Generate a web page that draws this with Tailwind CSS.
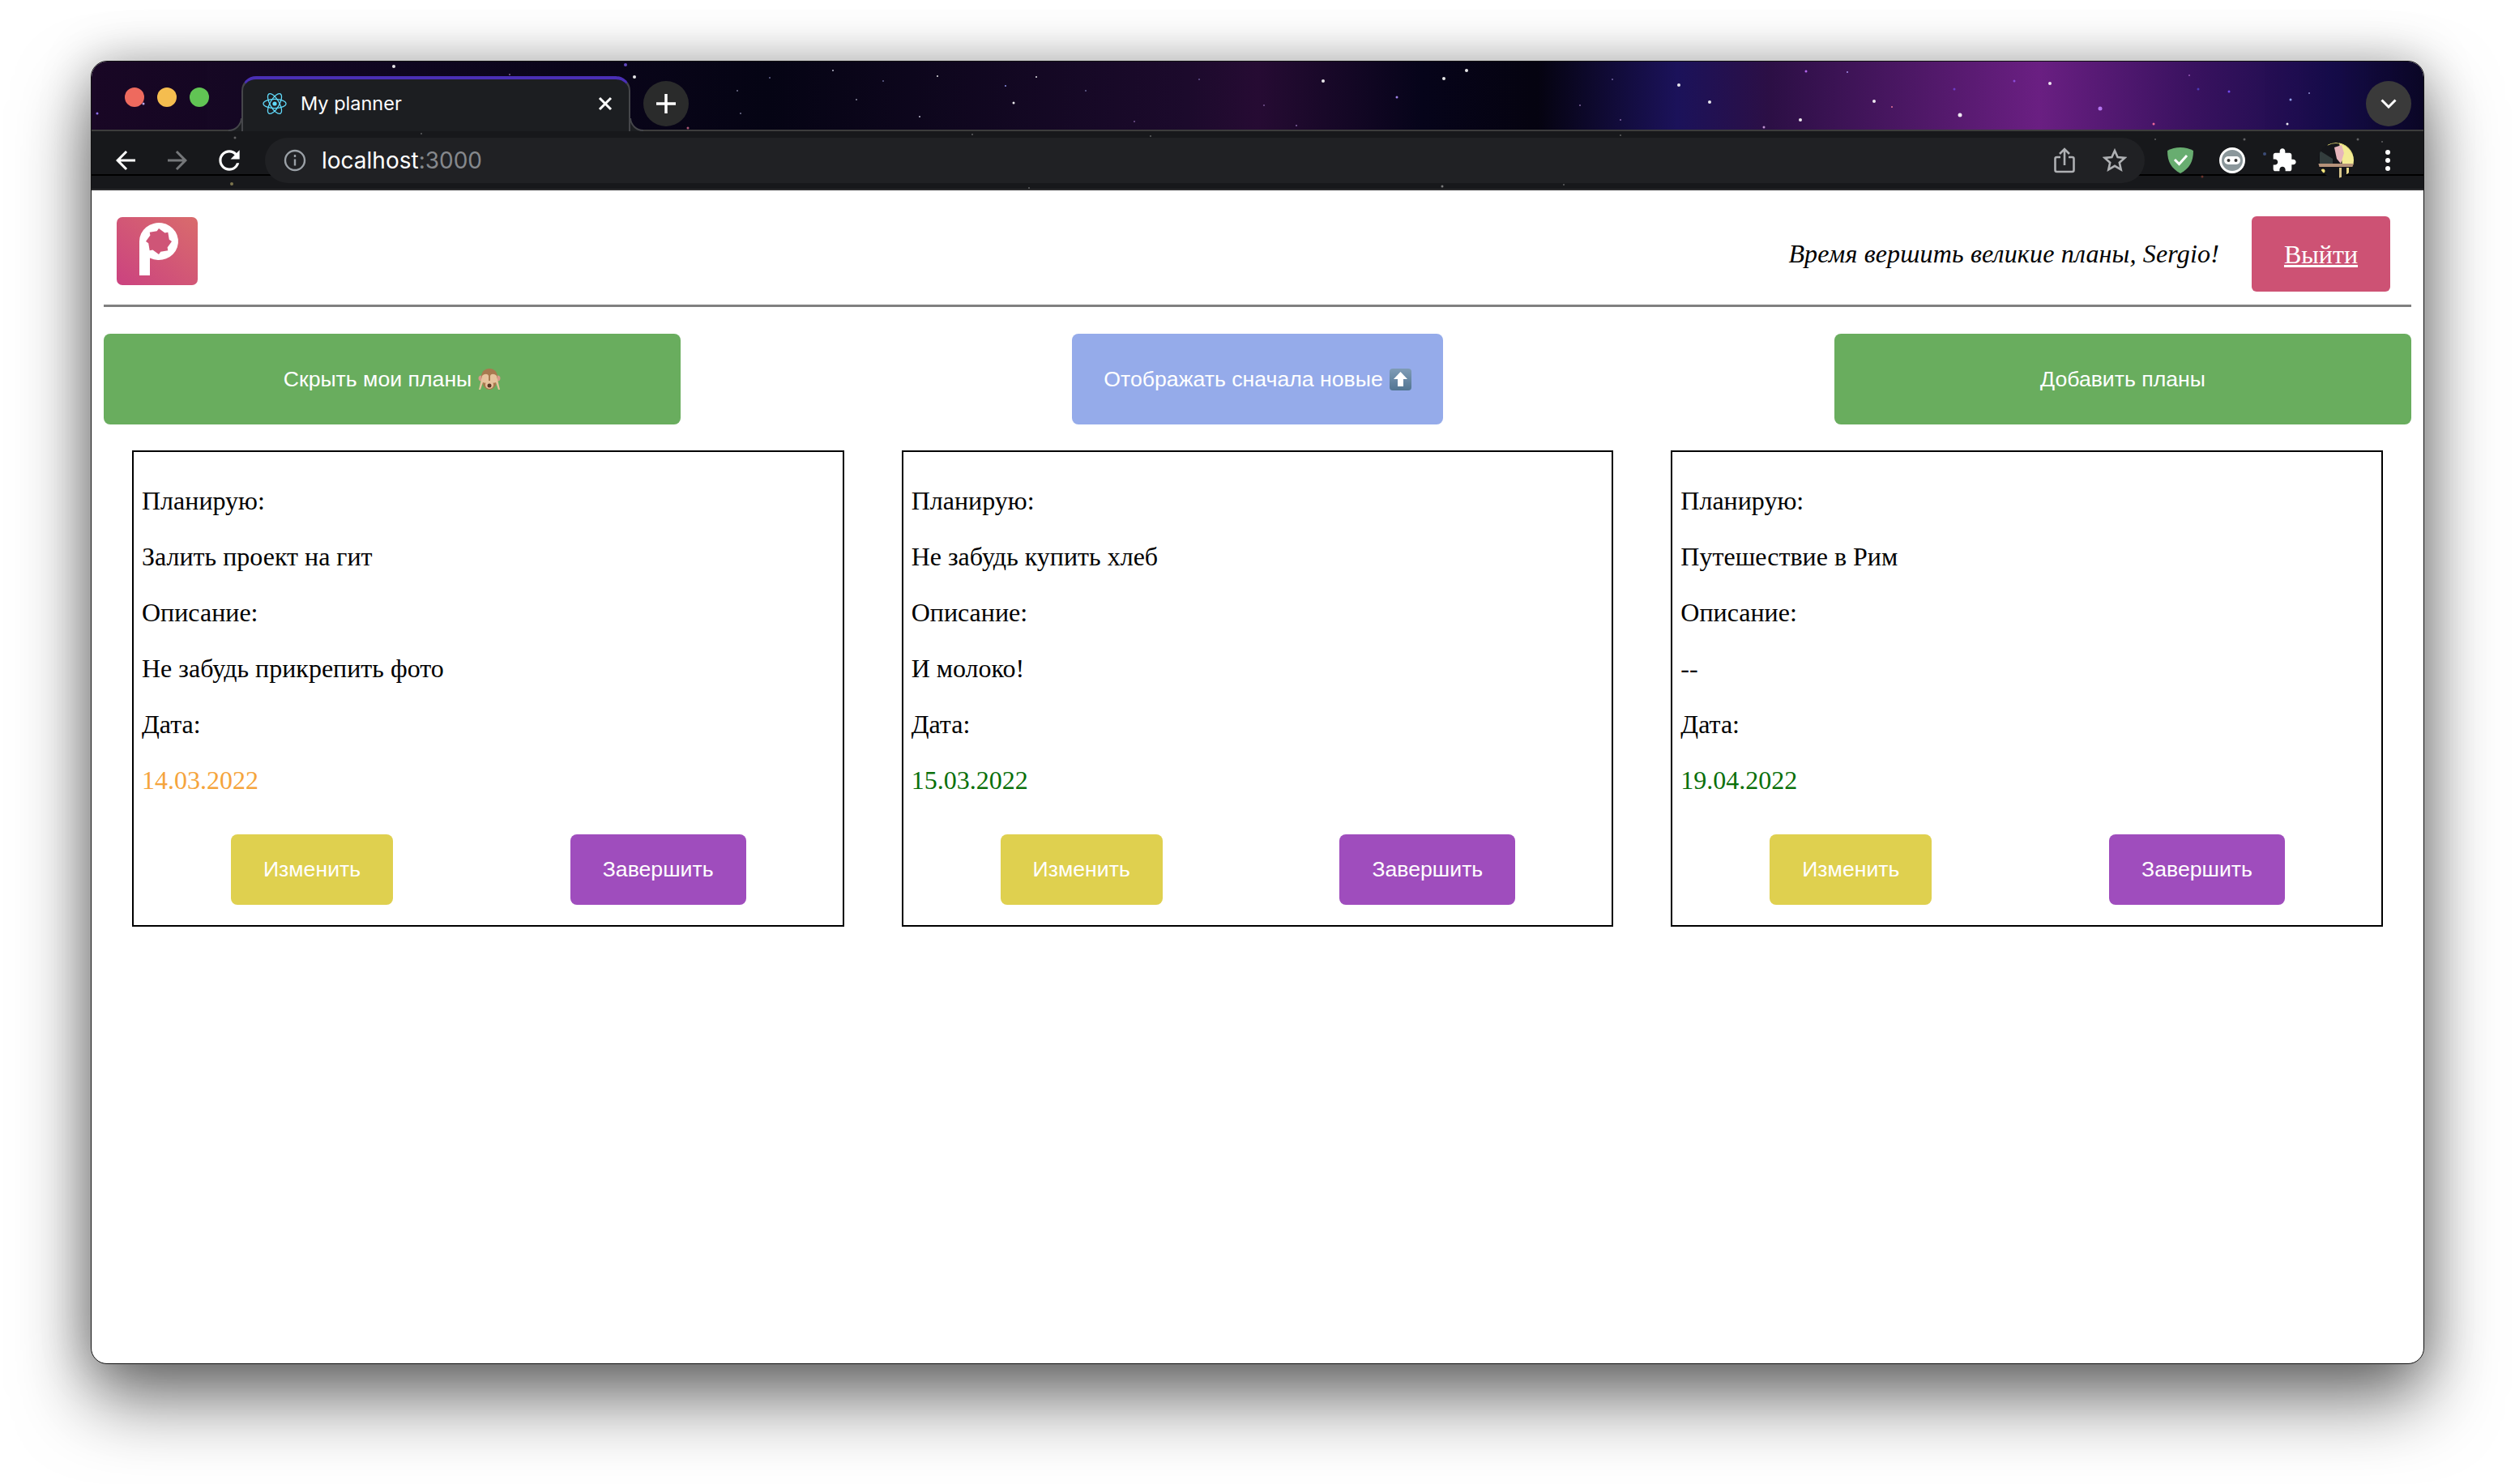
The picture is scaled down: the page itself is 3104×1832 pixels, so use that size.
<!DOCTYPE html>
<html lang="en">
  <head>
    <meta charset="UTF-8" />
    <title>My planner</title>
    <script src="https://cdn.jsdelivr.net/npm/@tailwindcss/browser@4"></script>
  </head>

  <body class="bg-white w-[3104px] h-[1832px] overflow-hidden">
    <div class="mt-[75px] ml-[112px] w-[2880px] h-[1609px] rounded-[20px] border border-[#111] bg-white overflow-hidden shadow-[0_44px_90px_rgba(0,0,0,0.55),0_0_60px_rgba(0,0,0,0.25)]">
      <!-- browser chrome -->
      <div class="relative h-[84px] flex items-start bg-[linear-gradient(90deg,#1a0826_0%,#0f0620_13%,#050414_29%,#1c0a2c_47%,#260b33_50%,#06041a_57%,#050310_62%,#1b125a_68%,#2c0f45_72%,#6a1f82_83.5%,#3a1260_90%,#160c4a_96%,#0a0625_100%)]">
        <svg class="absolute left-[-1px] top-[-1px] w-[2880px] h-[85px] opacity-90" viewBox="112 75 2880 85" fill="#fff">
          <g>
            <circle cx="486" cy="82" r="2" /><circle cx="783" cy="95" r="2" /><circle cx="177" cy="128" r="1.5" fill="#c9b6ff" />
            <circle cx="120" cy="140" r="1.5" fill="#9a7bff" /><circle cx="772" cy="80" r="2" fill="#6a50d0" /><circle cx="629" cy="92" r="1" fill="#8a6a9a" />
            <circle cx="1028" cy="87" r="1" fill="#cfcfe0" /><circle cx="1157" cy="94" r="1" /><circle cx="1279" cy="95" r="1" />
            <circle cx="1241" cy="106" r="1" fill="#9aa0ff" /><circle cx="1251" cy="127" r="1.5" /><circle cx="1135" cy="144" r="1" fill="#d0d0e0" />
            <circle cx="1057" cy="123" r="1" fill="#9a9ab0" /><circle cx="910" cy="112" r="1" fill="#8080a0" /><circle cx="914" cy="140" r="1" fill="#8080a0" />
            <circle cx="849" cy="158" r="1.5" fill="#c06080" /><circle cx="1810" cy="87" r="2" /><circle cx="1633" cy="100" r="2" />
            <circle cx="1782" cy="97" r="2" /><circle cx="1724" cy="120" r="1.5" fill="#b090ff" /><circle cx="2072" cy="105" r="2" />
            <circle cx="2110" cy="126" r="2" /><circle cx="2222" cy="148" r="2" /><circle cx="2313" cy="125" r="2" />
            <circle cx="2419" cy="142" r="2.5" /><circle cx="2229" cy="88" r="1.5" fill="#c070ff" /><circle cx="2280" cy="89" r="1" fill="#b0a0ff" />
            <circle cx="2335" cy="132" r="1" fill="#ff80a0" /><circle cx="2177" cy="157" r="1.5" fill="#d0a0e0" /><circle cx="2530" cy="103" r="2" />
            <circle cx="2592" cy="134" r="2.5" fill="#c080ff" /><circle cx="2827" cy="123" r="1.5" fill="#9db0ff" /><circle cx="2823" cy="153" r="1.5" />
            <circle cx="2702" cy="93" r="1" fill="#a060c0" /><circle cx="2751" cy="113" r="1.5" fill="#7a50ff" /><circle cx="2713" cy="110" r="1.5" fill="#5040c0" />
            <circle cx="2486" cy="100" r="1.5" fill="#9050e0" /><circle cx="2658" cy="153" r="1.5" fill="#ff70a0" /><circle cx="2960" cy="147" r="2" />
            <circle cx="2412" cy="110" r="1.5" fill="#7040d0" /><circle cx="2850" cy="115" r="1" fill="#a0a0e0" /><circle cx="1400" cy="150" r="1" fill="#8060a0" />
            <circle cx="1480" cy="98" r="1" fill="#7060a0" /><circle cx="1560" cy="130" r="1" fill="#8060a0" /><circle cx="1950" cy="130" r="1" fill="#9070b0" />
            <circle cx="1990" cy="98" r="1" fill="#8070b0" /><circle cx="2000" cy="148" r="1" fill="#9070b0" /><circle cx="950" cy="96" r="1" fill="#7070a0" />
            <circle cx="1090" cy="100" r="1" fill="#7070a0" /><circle cx="1340" cy="112" r="1" fill="#7070a0" /><circle cx="1600" cy="155" r="1" fill="#9070b0" />
          </g>
        </svg>

        <div class="relative flex gap-[16px] ml-[41px] mt-[32px]">
          <span class="w-[24px] h-[24px] rounded-full bg-[#ee6a5e]"></span>
          <span class="w-[24px] h-[24px] rounded-full bg-[#f5bd4f]"></span>
          <span class="w-[24px] h-[24px] rounded-full bg-[#61c454]"></span>
        </div>

        <!-- active tab -->
        <div class="relative z-10 ml-[40px] mt-[18px] w-[480px] h-[68px] flex items-center pl-[24px] pr-[20px] pb-[4px] bg-[#1c1e21] rounded-t-[18px] border-x-2 border-t-[4px] border-x-[#45464a] border-t-[#4a2fb5]">
          <svg class="w-[30px] h-[30px] shrink-0" viewBox="0 0 30 30" fill="none" stroke="#61dafb" stroke-width="1.3">
            <circle cx="15" cy="15" r="2.6" fill="#61dafb" stroke="none" />
            <ellipse cx="15" cy="15" rx="14" ry="5.6" />
            <ellipse cx="15" cy="15" rx="14" ry="5.6" transform="rotate(60 15 15)" />
            <ellipse cx="15" cy="15" rx="14" ry="5.6" transform="rotate(120 15 15)" />
          </svg>
          <span class="ml-[17px] text-[23.5px] leading-none text-white font-['Inter',sans-serif]">My planner</span>
          <svg class="ml-auto w-[18px] h-[18px]" viewBox="0 0 18 18" stroke="#fff" stroke-width="3"><path d="M2 2l14 14M16 2L2 16" /></svg>
          <svg class="absolute left-[-18px] bottom-0 w-[16px] h-[16px] -scale-x-100" viewBox="0 0 16 16"><path d="M0 0A16 16 0 0 0 16 16L0 16Z" fill="#1c1e21" /><path d="M0 0A16 16 0 0 0 16 15" fill="none" stroke="#45464a" stroke-width="2" /></svg>
          <svg class="absolute right-[-18px] bottom-0 w-[16px] h-[16px]" viewBox="0 0 16 16"><path d="M0 0A16 16 0 0 0 16 16L0 16Z" fill="#1c1e21" /><path d="M0 0A16 16 0 0 0 16 15" fill="none" stroke="#45464a" stroke-width="2" /></svg>
        </div>

        <div class="relative ml-[16px] mt-[24px] w-[56px] h-[56px] rounded-full bg-[#2a2b2b] flex items-center justify-center">
          <svg class="w-[24px] h-[24px]" viewBox="0 0 24 24" stroke="#fff" stroke-width="3.5"><path d="M12 0v24M0 12h24" /></svg>
        </div>
        <div class="relative ml-auto mr-[15px] mt-[24px] w-[56px] h-[56px] rounded-full bg-[#3a3a3a] flex items-center justify-center">
          <svg class="w-[20px] h-[12px]" viewBox="0 0 20 12" fill="none" stroke="#fff" stroke-width="3"><path d="M1.5 1.5L10 10l8.5-8.5" /></svg>
        </div>
      </div>

      <!-- toolbar -->
      <div class="relative h-[75px] bg-[#17181b] border-t-2 border-t-[#3c3c3c] border-b-2 border-b-[#2c2c2e] flex items-center pl-[10px]">
        <div class="absolute left-0 right-0 top-[53px] h-[2px] bg-black"></div>
        <svg class="absolute left-[-1px] top-[-2px] w-[2880px] h-[75px] opacity-50" viewBox="112 160 2880 75" fill="#aaa">
          <circle cx="290" cy="170" r="1.5" /><circle cx="286" cy="227" r="2" fill="#e0d080" /><circle cx="520" cy="165" r="1" /><circle cx="1200" cy="166" r="1" />
          <circle cx="1420" cy="168" r="1" /><circle cx="1270" cy="232" r="1" /><circle cx="2660" cy="172" r="1" /><circle cx="2770" cy="172" r="1.5" />
          <circle cx="2795" cy="190" r="2" fill="#6080d0" /><circle cx="2910" cy="172" r="1.5" /><circle cx="2718" cy="218" r="1.5" fill="#c05040" /><circle cx="2940" cy="175" r="1" />
          <circle cx="1780" cy="230" r="1.5" fill="#ddd" /><circle cx="1930" cy="228" r="1" /><circle cx="2000" cy="167" r="1" />
        </svg>
        <button class="relative w-[64px] h-[64px] flex items-center justify-center">
          <svg class="w-[36px] h-[36px]" viewBox="0 0 24 24" fill="#fff"><path d="M20 11H7.83l5.59-5.59L12 4l-8 8 8 8 1.41-1.41L7.83 13H20v-2z" /></svg>
        </button>
        <button class="relative w-[64px] h-[64px] flex items-center justify-center">
          <svg class="w-[36px] h-[36px]" viewBox="0 0 24 24" fill="#75777a"><path d="M4 11h12.17l-5.59-5.59L12 4l8 8-8 8-1.41-1.41L16.17 13H4v-2z" /></svg>
        </button>
        <button class="relative w-[64px] h-[64px] flex items-center justify-center">
          <svg class="w-[38px] h-[38px]" viewBox="0 0 24 24" fill="#fff"><path d="M17.65 6.35A7.96 7.96 0 0 0 12 4c-4.42 0-7.99 3.58-7.99 8s3.57 8 7.99 8c3.73 0 6.84-2.55 7.73-6h-2.08A5.99 5.99 0 0 1 12 18c-3.31 0-6-2.69-6-6s2.69-6 6-6c1.66 0 3.14.69 4.22 1.78L13 11h7V4l-2.35 2.35z" /></svg>
        </button>

        <!-- address bar -->
        <div class="relative ml-[12px] w-[2320px] h-[56px] rounded-full bg-[#202124] flex items-center pl-[23px] pr-[20px]">
          <svg class="w-[28px] h-[28px] shrink-0" viewBox="0 0 28 28" fill="none" stroke="#9aa0a6" stroke-width="2.4"><circle cx="14" cy="14" r="12" /><path d="M14 12.5v8M14 7v3" /></svg>
          <span class="ml-[19px] text-[28px] leading-none text-white font-['Inter',sans-serif]">localhost<span class="text-[#85888c]">:3000</span></span>
          <svg class="ml-auto w-[26px] h-[32px]" viewBox="0 0 26 32" fill="none" stroke="#aeb0b3" stroke-width="2.6"><path d="M8 12H3.5a2 2 0 0 0-2 2v14a2 2 0 0 0 2 2h19a2 2 0 0 0 2-2V14a2 2 0 0 0-2-2H18M13 22V2M7 8l6-6 6 6" /></svg>
          <svg class="ml-[34px] mr-[2px] w-[30px] h-[30px]" viewBox="0 0 30 30" fill="none" stroke="#aeb0b3" stroke-width="2.6"><path d="M15 3l3.6 8 8.7.9-6.5 5.8 1.9 8.6L15 21.8l-7.7 4.5 1.9-8.6-6.5-5.8 8.7-.9z" /></svg>
        </div>

        <div class="relative ml-[12px] w-[64px] h-[64px] flex items-center justify-center">
          <svg class="w-[32px] h-[32px]" viewBox="0 0 32 32"><path d="M16 0c6 0 11 1.500 16 4 0 14-5 22-16 28C5 26 0 18 0 4 5 1.500 10 0 16 0z" fill="#68ad70" /><path d="M9 15l5.500 5.500L24 10" fill="none" stroke="#fff" stroke-width="3" /></svg>
        </div>
        <div class="relative w-[64px] h-[64px] flex items-center justify-center">
          <svg class="w-[32px] h-[32px]" viewBox="0 0 32 32"><circle cx="16" cy="16" r="14.500" fill="#8b979b" stroke="#fff" stroke-width="3" /><rect x="6" y="11" width="20" height="10" rx="5" fill="#fff" /><circle cx="11.500" cy="16" r="2" fill="#333" /><circle cx="20.500" cy="16" r="2" fill="#333" /></svg>
        </div>
        <div class="relative w-[64px] h-[64px] flex items-center justify-center">
          <svg class="w-[32px] h-[32px]" viewBox="0 0 24 24" fill="#fff"><path d="M20.500 11H19V7c0-1.100-.9-2-2-2h-4V3.500C13 2.120 11.880 1 10.500 1S8 2.120 8 3.500V5H4c-1.100 0-1.990.9-1.990 2v3.800H3.500c1.490 0 2.700 1.210 2.700 2.700s-1.210 2.700-2.700 2.700H2V20c0 1.100.9 2 2 2h3.800v-1.500c0-1.490 1.210-2.700 2.700-2.700 1.490 0 2.700 1.210 2.700 2.700V22H17c1.100 0 2-.9 2-2v-4h1.500c1.380 0 2.500-1.120 2.500-2.500S21.880 11 20.500 11z" /></svg>
        </div>
        <div class="relative w-[64px] h-[64px] flex items-center justify-center">
          <svg class="w-[44px] h-[44px]" viewBox="0 0 44 44">
            <clipPath id="avatar"><circle cx="22" cy="22" r="22" /></clipPath>
            <g clip-path="url(#avatar)">
              <rect width="44" height="44" fill="#15161a" />
              <path d="M26 0h18v28H30z" fill="#f3eb94" />
              <path d="M20 6l9-3 3 10-4 13-5-6z" fill="#e6b5bb" />
              <path d="M2 10l16 10v6H2z" fill="#333d3d" />
              <rect y="26" width="44" height="4" fill="#b6937a" />
              <circle cx="6" cy="35" r="2.500" fill="#f1e27a" /><rect x="26" y="31" width="3" height="13" fill="#d8c68a" /><rect x="35" y="31" width="3" height="8" fill="#e9d98a" />
              <circle cx="22" cy="22" r="21.500" fill="none" stroke="#d8cf6e" stroke-width="1" stroke-dasharray="36 200" stroke-dashoffset="-90" />
            </g>
          </svg>
        </div>
        <div class="relative w-[64px] h-[64px] flex flex-col items-center justify-center gap-[4px]">
          <span class="w-[6px] h-[6px] rounded-full bg-white"></span>
          <span class="w-[6px] h-[6px] rounded-full bg-white"></span>
          <span class="w-[6px] h-[6px] rounded-full bg-white"></span>
        </div>
      </div>

      <!-- page -->
      <main class="px-[15px] font-['Liberation_Serif',serif] text-black">
        <header class="h-[144px] flex items-start justify-between pt-[32px] pl-[16px] pr-[26px] border-b-[3px] border-[#808080]">
          <svg class="w-[100px] h-[84px] mt-[1px]" viewBox="0 0 100 84">
            <defs>
              <linearGradient id="logo" x1="0" y1="1" x2="1" y2="0"><stop offset="0" stop-color="#cb4280" /><stop offset="1" stop-color="#d96c6c" /></linearGradient>
            </defs>
            <rect width="100" height="84" rx="7" fill="url(#logo)" />
            <path d="M28 30a24 23 0 1 1 13 20.500V72H28z" fill="#fff" />
            <path d="M68 30L62.600 37.500 63.300 41.300 54.300 42.800 52 46 44.500 40.600 40.700 41.300 39.200 32.300 36 30 41.400 22.500 40.700 18.700 49.700 17.200 52 14 59.500 19.400 63.300 18.700 64.800 27.700z" fill="#cf5577" />
          </svg>
          <div class="flex items-center gap-[40px]">
            <span class="italic text-[32px] leading-[37px] tracking-[0.17px] whitespace-nowrap">Время вершить великие планы, Sergio!</span>
            <a href="#" class="w-[171px] h-[93px] rounded-[6px] bg-[#cd5274] text-white text-[32px] underline flex items-center justify-center">Выйти</a>
          </div>
        </header>

        <div class="mt-[33px] flex justify-between font-['Liberation_Sans',sans-serif] text-[26.67px] text-white">
          <button class="w-[712px] h-[112px] rounded-[8px] bg-[#69ad5e] flex items-center justify-center gap-[8px]">
            Скрыть мои планы
            <svg class="w-[28px] h-[28px]" viewBox="0 0 28 28">
              <circle cx="4" cy="13" r="3.500" fill="#d99a8a" /><circle cx="24" cy="13" r="3.500" fill="#d99a8a" />
              <path d="M14 1c7 0 10 5 10 11 0 8-4 15-10 15S4 20 4 12C4 6 7 1 14 1z" fill="#a9794f" />
              <ellipse cx="14" cy="21" rx="5" ry="5" fill="#e7c39d" /><ellipse cx="14" cy="22" rx="2.500" ry="2.500" fill="#5b3524" />
              <path d="M5 10c3-3 7-3 8 0l0 7c-1 2-5 2-7 1L3 27H1z" fill="#e7c39d" />
              <path d="M23 10c-3-3-7-3-8 0l0 7c1 2 5 2 7 1l3 9h2z" fill="#e7c39d" />
            </svg>
          </button>
          <button class="w-[458px] h-[112px] rounded-[8px] bg-[#95abea] flex items-center justify-center gap-[8px]">
            Отображать сначала новые
            <svg class="w-[27px] h-[27px]" viewBox="0 0 27 27">
              <defs><linearGradient id="arrowbox" x1="0" y1="0" x2="0" y2="1"><stop offset="0" stop-color="#7f9cb6" /><stop offset="1" stop-color="#527592" /></linearGradient></defs>
              <rect width="27" height="27" rx="4" fill="url(#arrowbox)" />
              <path d="M13.500 4L22 13h-5v9h-7v-9H5z" fill="#fff" />
            </svg>
          </button>
          <button class="w-[712px] h-[112px] rounded-[8px] bg-[#69ad5e] flex items-center justify-center">Добавить планы</button>
        </div>

        <section class="mt-[32px] px-[35px] grid grid-cols-3 gap-[71px] text-[32px] leading-[37px]">
          <article class="border-2 border-black h-[588px] pt-[42px] pl-[10px]">
            <div class="flex flex-col gap-[32px]">
              <p>Планирую:</p>
              <p>Залить проект на гит</p>
              <p>Описание:</p>
              <p>Не забудь прикрепить фото</p>
              <p>Дата:</p>
              <p class="text-[#f5a43c]">14.03.2022</p>
            </div>
            <div class="mt-[48px] ml-[110px] mr-[119px] flex justify-between font-['Liberation_Sans',sans-serif] text-[26.67px] text-white">
              <button class="w-[200px] h-[87px] rounded-[8px] bg-[#dfd04f]">Изменить</button>
              <button class="w-[217px] h-[87px] rounded-[8px] bg-[#9f4dbd]">Завершить</button>
            </div>
          </article>
          <article class="border-2 border-black h-[588px] pt-[42px] pl-[10px]">
            <div class="flex flex-col gap-[32px]">
              <p>Планирую:</p>
              <p>Не забудь купить хлеб</p>
              <p>Описание:</p>
              <p>И молоко!</p>
              <p>Дата:</p>
              <p class="text-[#0a700a]">15.03.2022</p>
            </div>
            <div class="mt-[48px] ml-[110px] mr-[119px] flex justify-between font-['Liberation_Sans',sans-serif] text-[26.67px] text-white">
              <button class="w-[200px] h-[87px] rounded-[8px] bg-[#dfd04f]">Изменить</button>
              <button class="w-[217px] h-[87px] rounded-[8px] bg-[#9f4dbd]">Завершить</button>
            </div>
          </article>
          <article class="border-2 border-black h-[588px] pt-[42px] pl-[10px]">
            <div class="flex flex-col gap-[32px]">
              <p>Планирую:</p>
              <p>Путешествие в Рим</p>
              <p>Описание:</p>
              <p>--</p>
              <p>Дата:</p>
              <p class="text-[#0a700a]">19.04.2022</p>
            </div>
            <div class="mt-[48px] ml-[110px] mr-[119px] flex justify-between font-['Liberation_Sans',sans-serif] text-[26.67px] text-white">
              <button class="w-[200px] h-[87px] rounded-[8px] bg-[#dfd04f]">Изменить</button>
              <button class="w-[217px] h-[87px] rounded-[8px] bg-[#9f4dbd]">Завершить</button>
            </div>
          </article>
        </section>
      </main>
    </div>
  </body>
</html>
